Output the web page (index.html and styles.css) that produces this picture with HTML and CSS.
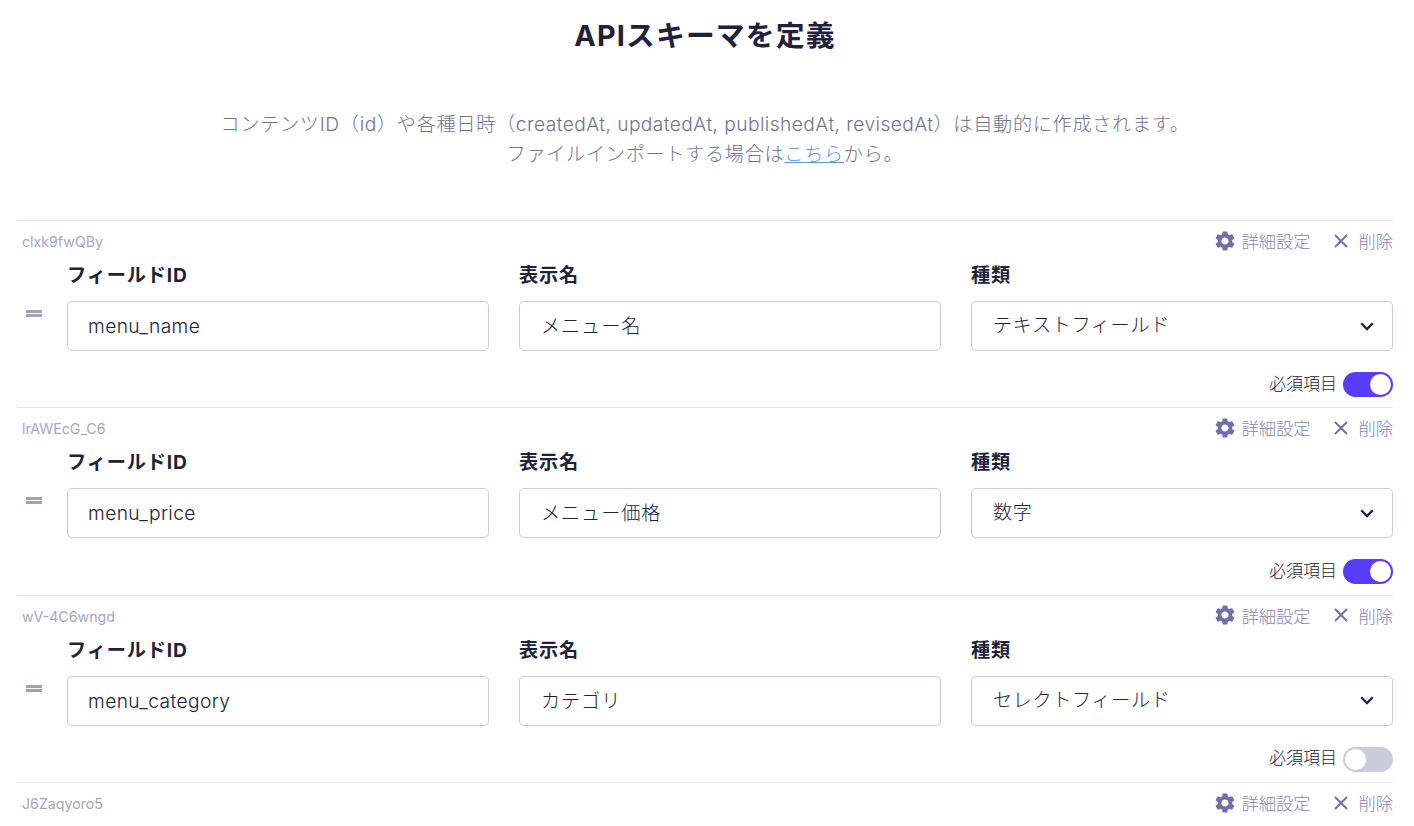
FILE: index.html
```html
<!DOCTYPE html>
<html lang="ja">
<head>
<meta charset="utf-8">
<title>APIスキーマを定義</title>
<link rel="stylesheet" href="styles.css">
</head>
<body>
<main class="page">
  <h1 class="title">APIスキーマを定義</h1>
  <p class="intro">コンテンツID（id）や各種日時（<span class="intro-latin">createdAt, updatedAt, publishedAt, revisedAt</span>）は自動的に作成されます。<br>ファイルインポートする場合は<a class="link" href="#">こちら</a>から。</p>
  <svg class="defs" width="0" height="0" aria-hidden="true">
    <symbol id="gear" viewBox="0 0 24 24"><path d="M19.14 12.94c.04-.3.06-.61.06-.94 0-.32-.02-.64-.07-.94l2.03-1.58a.49.49 0 0 0 .12-.61l-1.92-3.32a.488.488 0 0 0-.59-.22l-2.39.96c-.5-.38-1.03-.7-1.62-.94l-.36-2.54a.484.484 0 0 0-.48-.41h-3.84c-.24 0-.43.17-.47.41l-.36 2.54c-.59.24-1.13.57-1.62.94l-2.39-.96c-.22-.08-.47 0-.59.22L2.74 8.87c-.12.21-.08.47.12.61l2.03 1.58c-.05.3-.09.63-.09.94s.02.64.07.94l-2.03 1.58a.49.49 0 0 0-.12.61l1.92 3.32c.12.22.37.29.59.22l2.39-.96c.5.38 1.03.7 1.62.94l.36 2.54c.05.24.24.41.48.41h3.84c.24 0 .44-.17.47-.41l.36-2.54c.59-.24 1.13-.56 1.62-.94l2.39.96c.22.08.47 0 .59-.22l1.92-3.32c.12-.22.07-.47-.12-.61l-2.01-1.58zM12 15.6c-1.98 0-3.6-1.62-3.6-3.6s1.62-3.6 3.6-3.6 3.6 1.62 3.6 3.6-1.62 3.6-3.6 3.6z"/></symbol>
    <symbol id="cross" viewBox="0 0 14 14"><path d="M1 1l12 12M13 1L1 13" fill="none" stroke="currentColor" stroke-width="1.9"/></symbol>
    <symbol id="chev" viewBox="0 0 14 9"><path d="M1.2 1.2L7 7l5.8-5.8" fill="none" stroke="currentColor" stroke-width="2.3"/></symbol>
  </svg>

  <section class="field">
    <div class="field-top">
      <span class="field-key">clxk9fwQBy</span>
      <div class="actions">
        <button class="action"><svg class="gear"><use href="#gear"/></svg>詳細設定</button>
        <button class="action action-delete"><svg class="cross"><use href="#cross"/></svg>削除</button>
      </div>
    </div>
    <div class="field-main">
      <div class="handle"></div>
      <div class="col"><label class="label">フィールドID</label><div class="box latin">menu_name</div></div>
      <div class="col"><label class="label">表示名</label><div class="box">メニュー名</div></div>
      <div class="col"><label class="label">種類</label><div class="box select">テキストフィールド<svg class="chev"><use href="#chev"/></svg></div></div>
    </div>
    <div class="required"><span class="required-text">必須項目</span><span class="toggle on"></span></div>
  </section>

  <section class="field">
    <div class="field-top">
      <span class="field-key">lrAWEcG_C6</span>
      <div class="actions">
        <button class="action"><svg class="gear"><use href="#gear"/></svg>詳細設定</button>
        <button class="action action-delete"><svg class="cross"><use href="#cross"/></svg>削除</button>
      </div>
    </div>
    <div class="field-main">
      <div class="handle"></div>
      <div class="col"><label class="label">フィールドID</label><div class="box latin">menu_price</div></div>
      <div class="col"><label class="label">表示名</label><div class="box">メニュー価格</div></div>
      <div class="col"><label class="label">種類</label><div class="box select">数字<svg class="chev"><use href="#chev"/></svg></div></div>
    </div>
    <div class="required"><span class="required-text">必須項目</span><span class="toggle on"></span></div>
  </section>

  <section class="field">
    <div class="field-top">
      <span class="field-key">wV-4C6wngd</span>
      <div class="actions">
        <button class="action"><svg class="gear"><use href="#gear"/></svg>詳細設定</button>
        <button class="action action-delete"><svg class="cross"><use href="#cross"/></svg>削除</button>
      </div>
    </div>
    <div class="field-main">
      <div class="handle"></div>
      <div class="col"><label class="label">フィールドID</label><div class="box latin">menu_category</div></div>
      <div class="col"><label class="label">表示名</label><div class="box">カテゴリ</div></div>
      <div class="col"><label class="label">種類</label><div class="box select">セレクトフィールド<svg class="chev"><use href="#chev"/></svg></div></div>
    </div>
    <div class="required"><span class="required-text">必須項目</span><span class="toggle"></span></div>
  </section>

  <section class="field field-last">
    <div class="field-top">
      <span class="field-key">J6Zaqyoro5</span>
      <div class="actions">
        <button class="action"><svg class="gear"><use href="#gear"/></svg>詳細設定</button>
        <button class="action action-delete"><svg class="cross"><use href="#cross"/></svg>削除</button>
      </div>
    </div>
  </section>
</main>
</body>
</html>
```
FILE: styles.css
```css
* { box-sizing: border-box; }
html, body { margin: 0; height: 100%; overflow: hidden; background: #fff; }
body {
  font-family: Inter, "Noto Sans CJK JP", sans-serif;
  font-weight: 300;
  color: #21213b;
}
.page { padding: 0 21px 0 17px; }
.defs { position: absolute; }
.title {
  margin: 0;
  padding-top: 15px;
  height: 109px;
  font-size: 28.8px;
  line-height: 42px;
  font-weight: 700;
  letter-spacing: 0.04em;
  text-align: center;
}
.intro {
  margin: 0 0 51px;
  font-size: 19.2px;
  line-height: 30px;
  color: #74748f;
  text-align: center;
  letter-spacing: 0.65px;
}
.intro-latin { letter-spacing: 0.43px; }
.link { color: #5f96dc; text-decoration: underline; }
.field {
  height: 187.4px;
  border-top: 1px solid #e6e6f2;
}
.field-last { height: 41px; }
.field-top {
  display: flex;
  justify-content: space-between;
  align-items: center;
  height: 41px;
  padding-left: 5px;
}
.field-key { font-size: 14.2px; font-weight: 400; color: #a6a6bf; }
.actions { display: flex; gap: 24px; padding-bottom: 2px; }
.action {
  display: flex;
  align-items: center;
  gap: 4px;
  padding: 0;
  border: 0;
  background: none;
  font: inherit;
  font-size: 17.28px;
  color: #8585b5;
}
.action-delete { gap: 10px; }
.gear { width: 24px; height: 24px; fill: #6f6fae; }
.cross { width: 14px; height: 14px; color: #6f6fae; }
.field-main {
  display: grid;
  grid-template-columns: 20px repeat(3, 422px);
  column-gap: 30px;
  align-items: end;
}
.handle {
  height: 7px;
  width: 16px;
  margin: 0 0 34px 9px;
  border-top: 3px solid #a0a0ba;
  border-bottom: 3px solid #a0a0ba;
}
.label {
  display: block;
  font-size: 19.2px;
  line-height: 27px;
  font-weight: 700;
  letter-spacing: 0.045em;
  margin-bottom: 12px;
}
.box {
  display: flex;
  align-items: center;
  justify-content: space-between;
  height: 50px;
  padding: 0 20px 2px 21px;
  border: 1px solid #cbcbe3;
  border-radius: 5px;
  font-size: 19.2px;
  letter-spacing: 0.045em;
}
.latin { padding: 0 20px; letter-spacing: 0.02em; }
.select { padding: 0 18px 4px 21px; letter-spacing: 0.03em; }
.chev { width: 14px; height: 9px; color: #21213b; margin-top: 4px; }
.required {
  display: flex;
  justify-content: flex-end;
  align-items: center;
  gap: 6px;
  margin-top: 21px;
  height: 25px;
  font-size: 17px;
}
.required-text { padding-bottom: 5px; }
.toggle {
  position: relative;
  width: 50px;
  height: 25px;
  border-radius: 13px;
  background: #cbcbdc;
}
.toggle::after {
  content: "";
  position: absolute;
  top: 2px;
  left: 2px;
  width: 21px;
  height: 21px;
  border-radius: 50%;
  background: #fff;
}
.toggle.on { background: #563dff; }
.toggle.on::after { left: 27px; }
```
